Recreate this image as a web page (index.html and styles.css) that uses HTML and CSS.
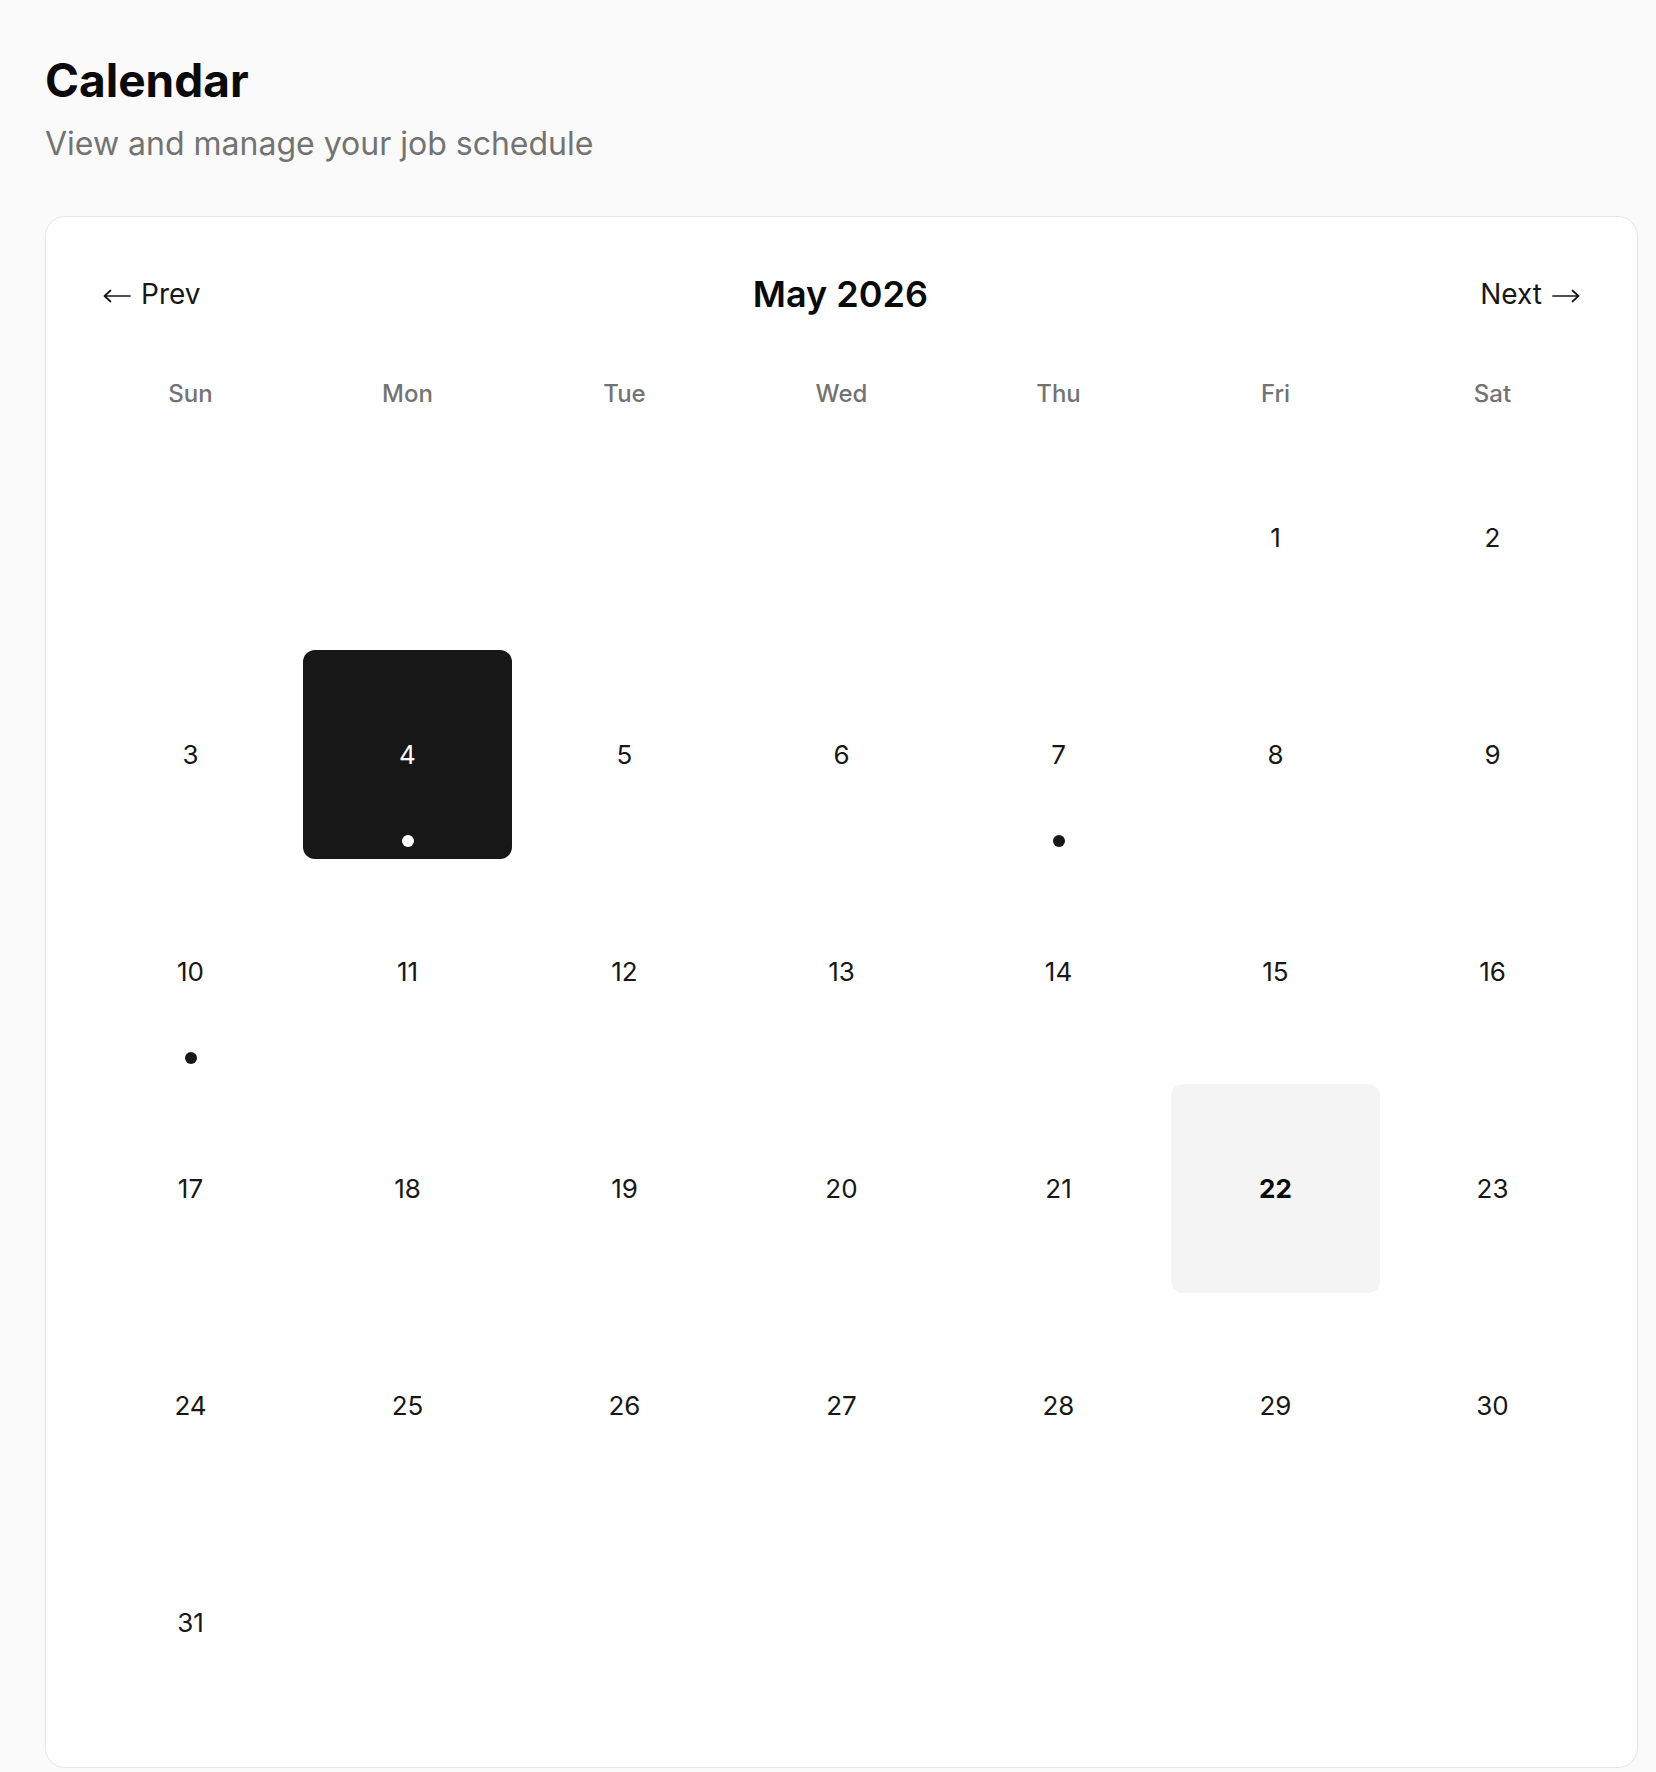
FILE: index.html
```html
<!DOCTYPE html>
<html lang="en">
<head>
    <meta charset="UTF-8">
    <meta name="viewport" content="width=device-width, initial-scale=1.0">
    <title>Calendar</title>
    <link rel="stylesheet" href="styles.css">
</head>
<body>

    <h1 class="page-title">Calendar</h1>
    <p class="page-subtitle">View and manage your job schedule</p>

    <div class="card">
        <div class="cal-nav">
            <button class="nav-btn">
                <svg class="arrow" viewBox="0 0 28 14" width="28" height="14"><path d="M27 7H1.5M7.5 1.5L1.5 7l6 5.5"/></svg>
                Prev
            </button>
            <h2 class="month">May 2026</h2>
            <button class="nav-btn">
                Next
                <svg class="arrow" viewBox="0 0 28 14" width="28" height="14"><path d="M1 7h25.5M20.5 1.5L26.5 7l-6 5.5"/></svg>
            </button>
        </div>

        <div class="weekdays">
            <div class="weekday">Sun</div>
            <div class="weekday">Mon</div>
            <div class="weekday">Tue</div>
            <div class="weekday">Wed</div>
            <div class="weekday">Thu</div>
            <div class="weekday">Fri</div>
            <div class="weekday">Sat</div>
        </div>

        <div class="days">
            <div class="day empty"></div>
            <div class="day empty"></div>
            <div class="day empty"></div>
            <div class="day empty"></div>
            <div class="day empty"></div>
            <div class="day">1</div>
            <div class="day">2</div>

            <div class="day">3</div>
            <div class="day selected">4<span class="dot"></span></div>
            <div class="day">5</div>
            <div class="day">6</div>
            <div class="day">7<span class="dot"></span></div>
            <div class="day">8</div>
            <div class="day">9</div>

            <div class="day">10<span class="dot"></span></div>
            <div class="day">11</div>
            <div class="day">12</div>
            <div class="day">13</div>
            <div class="day">14</div>
            <div class="day">15</div>
            <div class="day">16</div>

            <div class="day">17</div>
            <div class="day">18</div>
            <div class="day">19</div>
            <div class="day">20</div>
            <div class="day">21</div>
            <div class="day today">22</div>
            <div class="day">23</div>

            <div class="day">24</div>
            <div class="day">25</div>
            <div class="day">26</div>
            <div class="day">27</div>
            <div class="day">28</div>
            <div class="day">29</div>
            <div class="day">30</div>

            <div class="day">31</div>
        </div>
    </div>

</body>
</html>
```

FILE: styles.css
```css
/* Reset */
* { margin: 0; padding: 0; box-sizing: border-box; }
html, body { background: #fafafa; }
body {
    font-family: Inter, "Noto Sans", sans-serif;
    color: #171717;
    padding: 53px 18px 0 45px;
}

.page-title {
    font-size: 46px;
    font-weight: 700;
    line-height: 1.2;
    color: #0a0a0a;
}
.page-subtitle {
    font-size: 32px;
    line-height: 45px;
    color: #737373;
    margin-top: 13px;
}

.card {
    margin-top: 50px;
    width: 1593px;
    background: #fff;
    border: 1px solid #e5e5e5;
    border-radius: 20px;
    padding: 40px;
}

.cal-nav {
    display: flex;
    justify-content: space-between;
    align-items: center;
    height: 74px;
    margin-bottom: 45px;
}
.nav-btn {
    display: inline-flex;
    align-items: center;
    gap: 10px;
    font-family: inherit;
    font-size: 28px;
    background: none;
    border: none;
    padding: 0 17px;
    color: #171717;
    cursor: pointer;
}
.arrow {
    fill: none;
    stroke: #171717;
    stroke-width: 1.7;
    stroke-linecap: round;
    stroke-linejoin: round;
    margin-top: 3px;
}
.month { font-size: 36px; font-weight: 600; color: #0a0a0a; }

.weekdays, .days {
    display: grid;
    grid-template-columns: repeat(7, 209px);
    column-gap: 8px;
}
.weekdays { margin-bottom: 21px; }
.weekday {
    text-align: center;
    font-size: 24px;
    font-weight: 500;
    line-height: 36px;
    color: #737373;
}

.days { row-gap: 8px; }
.day {
    height: 209px;
    display: flex;
    align-items: center;
    justify-content: center;
    font-size: 26px;
    border-radius: 12px;
    position: relative;
}
.day.selected { background: #171717; color: #fff; }
.day.today { background: #f4f4f4; font-weight: 700; color: #0a0a0a; }

.dot {
    position: absolute;
    bottom: 12px;
    left: 50%;
    width: 12px;
    height: 12px;
    margin-left: -6px;
    border-radius: 50%;
    background: #171717;
}
.selected .dot { background: #fff; }
```
